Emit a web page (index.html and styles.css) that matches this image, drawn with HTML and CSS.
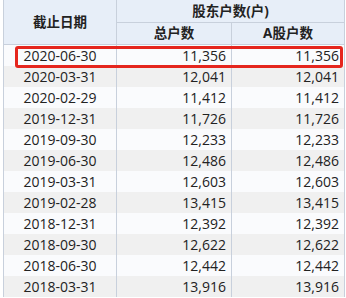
FILE: index.html
```html
<!DOCTYPE html>
<html>
<head>
<meta charset="utf-8">
<link rel="stylesheet" href="styles.css">
</head>
<body>
<div class="wrap">
<table class="grid">
<colgroup><col class="c1"><col class="c2"><col class="c3"></colgroup>
<thead>
<tr class="h1"><th rowspan="2">截止日期</th><th colspan="2">股东户数(户)</th></tr>
<tr class="h2"><th>总户数</th><th>A股户数</th></tr>
</thead>
<tbody>
<tr><td>2020-06-30</td><td>11,356</td><td>11,356</td></tr>
<tr><td>2020-03-31</td><td>12,041</td><td>12,041</td></tr>
<tr><td>2020-02-29</td><td>11,412</td><td>11,412</td></tr>
<tr><td>2019-12-31</td><td>11,726</td><td>11,726</td></tr>
<tr><td>2019-09-30</td><td>12,233</td><td>12,233</td></tr>
<tr><td>2019-06-30</td><td>12,486</td><td>12,486</td></tr>
<tr><td>2019-03-31</td><td>12,603</td><td>12,603</td></tr>
<tr><td>2019-02-28</td><td>13,415</td><td>13,415</td></tr>
<tr><td>2018-12-31</td><td>12,392</td><td>12,392</td></tr>
<tr><td>2018-09-30</td><td>12,622</td><td>12,622</td></tr>
<tr><td>2018-06-30</td><td>12,442</td><td>12,442</td></tr>
<tr><td>2018-03-31</td><td>13,916</td><td>13,916</td></tr>
</tbody>
</table>
<div class="mark"></div>
</div>
</body>
</html>
```
FILE: styles.css
```css
html, body { margin: 0; padding: 0; background: #fff; }
body { font-family: "Open Sans", "Noto Sans CJK SC", sans-serif; color: #222; }
.wrap { position: relative; padding-left: 3px; width: 341px; }
.grid { border-collapse: collapse; width: 341px; table-layout: fixed; font-size: 14px; }
.c1 { width: 113px; }
.c2 { width: 115px; }
.c3 { width: 113px; }
.grid th { background: #e7eef8; font-family: "Open Sans", "Noto Sans CJK SC", sans-serif; font-weight: 700; font-size: 13.5px; color: #222; border: 1px solid #c8d0dc; padding: 0; line-height: 20px; }
.grid thead tr { height: 22px; }
.grid thead tr.h1 th { border-top: none; }
.grid td { height: 21px; padding: 0 5px; border-left: 1px solid #c8d0dc; border-right: 1px solid #c8d0dc; line-height: 21px; text-align: right; background: #fafbfd; }
.grid td:first-child { text-align: center; }
.grid tbody tr:nth-child(even) td { background: #f0f0f0; }
.mark { position: absolute; left: 15px; top: 46px; width: 322px; height: 16px; border: 3px solid #e5261e; border-radius: 3px; }
```
